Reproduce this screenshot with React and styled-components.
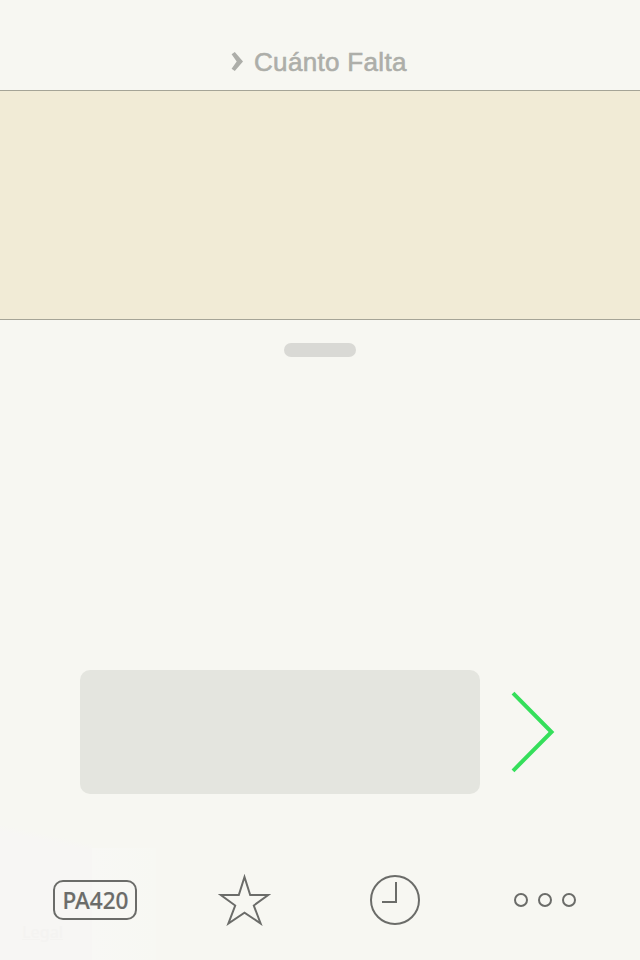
import React from "react";
import styled, { createGlobalStyle } from "styled-components";

const GlobalStyle = createGlobalStyle`
  * { box-sizing: border-box; }
  body { margin: 0; background: #f7f7f2; }
`;

const Screen = styled.main`
  width: 640px;
  height: 960px;
  display: flex;
  flex-direction: column;
  overflow: hidden;
  background: #f7f7f2;
  font-family: "Liberation Sans", Arial, sans-serif;
`;

const Header = styled.header`
  height: 90px;
  padding: 47px 0 0 231px;
  display: flex;
  align-items: flex-start;
  gap: 10px;
  color: #adaea9;
`;

const HeaderChevron = styled.svg`
  width: 13px;
  height: 20px;
  margin-top: 5px;
  flex: none;
`;

const Title = styled.h1`
  margin: 0;
  font-size: 26px;
  line-height: 30px;
  font-weight: 400;
  letter-spacing: 0.32px;
  white-space: nowrap;
  -webkit-text-stroke: 0.6px currentColor;
`;

const Banner = styled.section`
  height: 230px;
  flex: none;
  background: #f1ebd6;
  border-top: 1px solid #a5a497;
  border-bottom: 1px solid #a5a497;
`;

const Panel = styled.section`
  height: 350px;
  padding-top: 23px;
  flex: none;
`;

const Handle = styled.div`
  width: 72px;
  height: 14px;
  margin: 0 auto;
  border-radius: 7px;
  background: #d9d9d5;
`;

const SearchRow = styled.form`
  height: 124px;
  padding-left: 80px;
  display: flex;
  align-items: center;
  gap: 30px;
`;

const StopInput = styled.input`
  width: 400px;
  height: 124px;
  border: 0;
  border-radius: 10px;
  background: #e4e5df;
  padding: 0 24px;
  font: 48px "Liberation Sans", Arial, sans-serif;
  outline: none;
`;

const SubmitButton = styled.button`
  width: 48px;
  height: 84px;
  padding: 0;
  border: 0;
  background: transparent;
  color: #35df5b;
  svg { display: block; }
`;

const Footer = styled.footer`
  height: 166px;
  flex: none;
  display: flex;
  flex-direction: column;
  padding-top: 80px;
  background:
    linear-gradient(90deg, #f8f8f5, #f7f8f3) 92px 54px / 64px 112px no-repeat,
    linear-gradient(12deg, #f7f6f4 80%, transparent 84%) 0 24px / 92px 142px no-repeat;
`;

const TabBar = styled.nav`
  height: 52px;
  padding-left: 53px;
  display: grid;
  grid-template-columns: 164px 152px 143px 64px;
  align-items: center;
  color: #6b6c69;
`;

const Tab = styled.a`
  display: block;
  width: max-content;
  svg { display: block; }
`;

const StopBadge = styled.span`
  width: 84px;
  height: 40px;
  border: 2px solid currentColor;
  border-radius: 10px;
  display: flex;
  align-items: center;
  justify-content: center;
`;

const StopCode = styled.span`
  font: 500 23.5px/34px "Noto Sans", sans-serif;
  -webkit-text-stroke: 0.2px currentColor;
  padding-bottom: 1px;
  transform: scaleX(0.96);
`;

const LegalLink = styled.a`
  margin: -4px 0 0 22px;
  width: max-content;
  color: #f4f3f1;
  font: 500 16px/20px "Noto Sans", sans-serif;
  text-decoration: underline;
`;

export default function App() {
  return (
    <>
      <GlobalStyle />
      <Screen>
        <Header>
          <HeaderChevron viewBox="0 0 13 20">
            <path d="M3.8 0 12 9.5 3.8 19 .6 16.8 5.7 9.5 .6 2.2Z" fill="currentColor" />
          </HeaderChevron>
          <Title>Cuánto Falta</Title>
        </Header>
        <Banner />
        <Panel><Handle /></Panel>
        <SearchRow>
          <StopInput />
          <SubmitButton type="button">
            <svg width="48" height="84" fill="none">
              <path d="M3 3.2 41.5 42 3 80.8" stroke="currentColor" strokeWidth="4" />
            </svg>
          </SubmitButton>
        </SearchRow>
        <Footer>
          <TabBar>
            <Tab><StopBadge><StopCode>PA420</StopCode></StopBadge></Tab>
            <Tab>
              <svg width="56" height="52" fill="none">
                <path d="M27.5 3 33.2 21H51.2L36.8 31.5 43.6 49.5 27.5 38.7 11.4 49.5 18.2 31.5 3.8 21H21.8Z" stroke="currentColor" strokeWidth="2" />
              </svg>
            </Tab>
            <Tab>
              <svg width="52" height="52" fill="none" stroke="currentColor" strokeWidth="2">
                <circle cx="26" cy="26" r="24" />
                <path d="M13 28H27V8" />
              </svg>
            </Tab>
            <Tab>
              <svg width="66" height="16" fill="none" stroke="currentColor" strokeWidth="2">
                <circle cx="9" cy="8" r="6" />
                <circle cx="33" cy="8" r="6" />
                <circle cx="57" cy="8" r="6" />
              </svg>
            </Tab>
          </TabBar>
          <LegalLink>Legal</LegalLink>
        </Footer>
      </Screen>
    </>
  );
}
